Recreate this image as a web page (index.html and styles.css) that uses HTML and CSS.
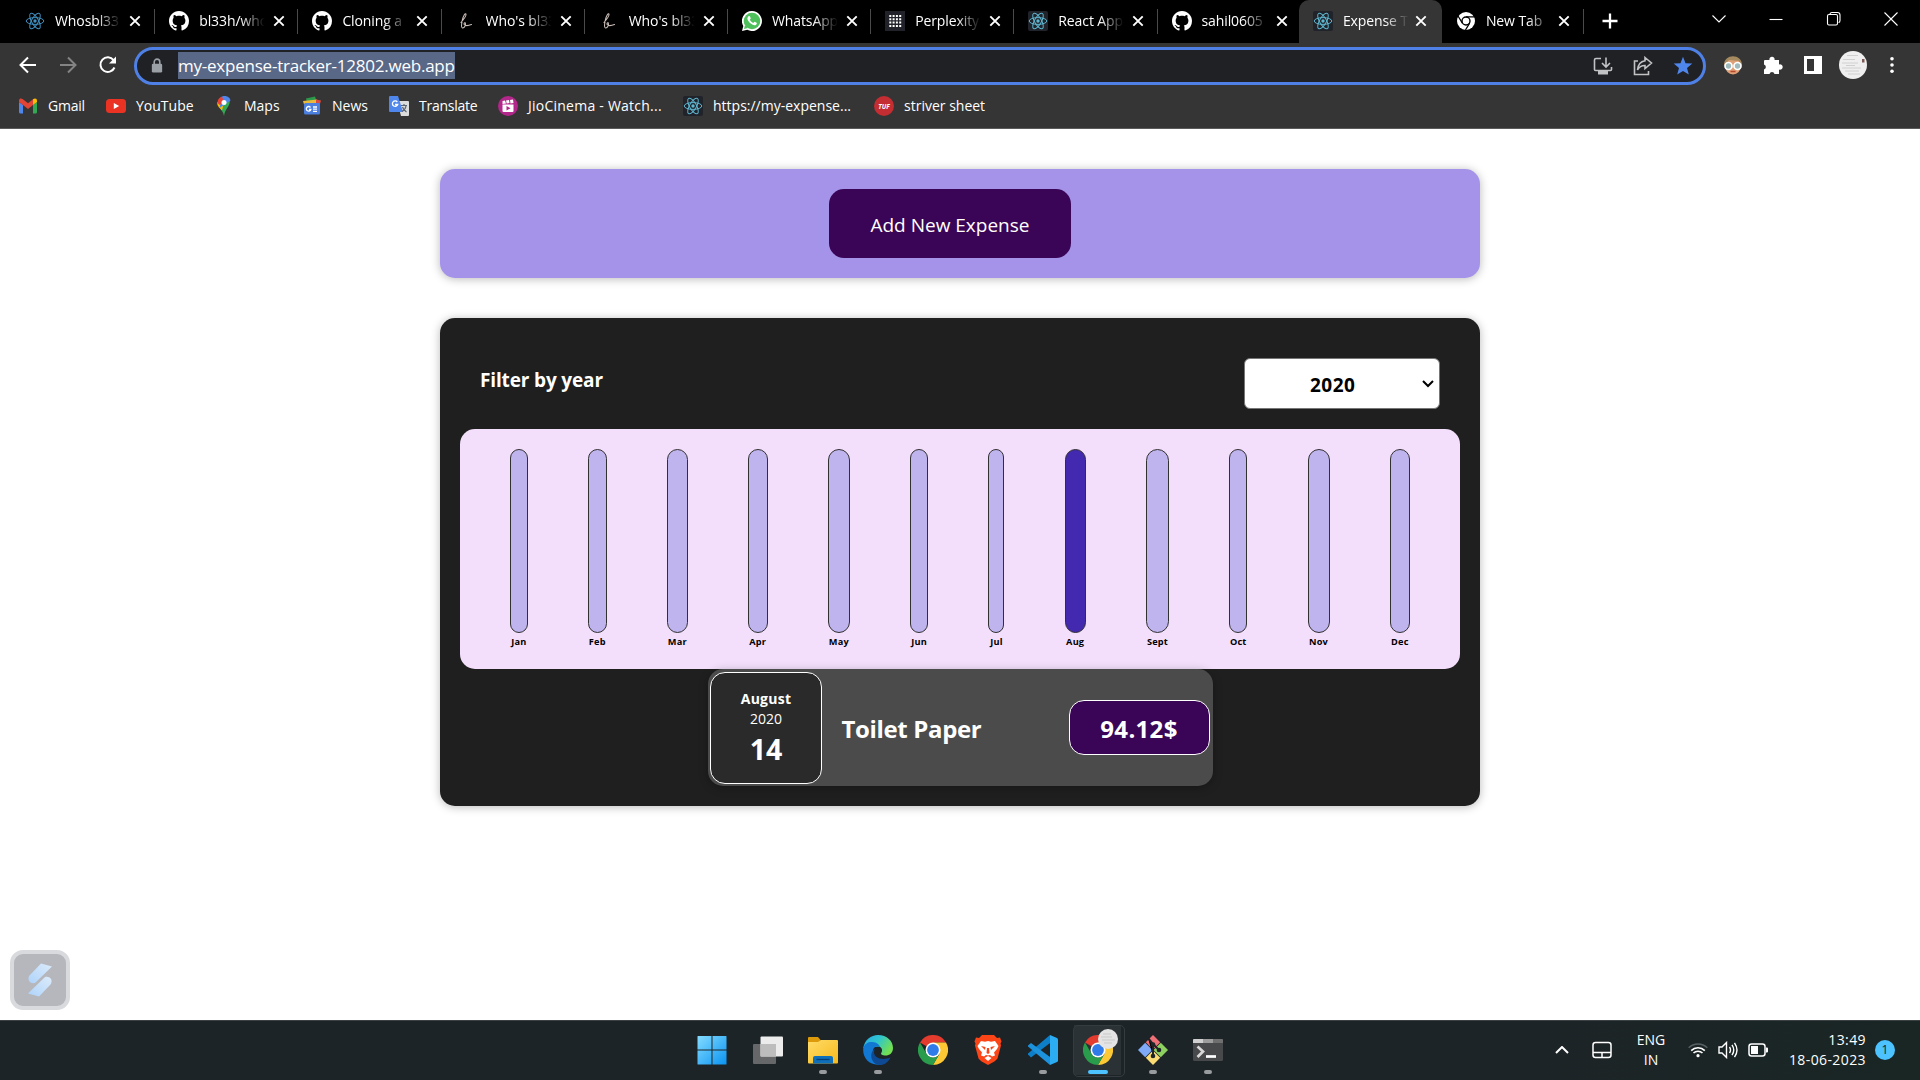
FILE: index.html
```html
<!DOCTYPE html>
<html lang="en">
<head>
<meta charset="utf-8">
<title>Expense Tracker</title>
<link rel="stylesheet" href="styles.css">
</head>
<body>
<svg class="defs" aria-hidden="true">
  <defs>
    <symbol id="react" viewBox="0 0 20 20">
      <g fill="none" stroke="currentColor" stroke-width="1">
        <ellipse cx="10" cy="10" rx="8.8" ry="3.4"/>
        <ellipse cx="10" cy="10" rx="8.8" ry="3.4" transform="rotate(60 10 10)"/>
        <ellipse cx="10" cy="10" rx="8.8" ry="3.4" transform="rotate(120 10 10)"/>
      </g>
      <circle cx="10" cy="10" r="1.7" fill="currentColor"/>
    </symbol>
    <symbol id="github" viewBox="0 0 16 16">
      <path fill="#fff" d="M8 0C3.58 0 0 3.58 0 8c0 3.54 2.29 6.53 5.47 7.59.4.07.55-.17.55-.38 0-.19-.01-.82-.01-1.49-2.01.37-2.53-.49-2.69-.94-.09-.23-.48-.94-.82-1.13-.28-.15-.68-.52-.01-.53.63-.01 1.08.58 1.23.82.72 1.21 1.87.87 2.33.66.07-.52.28-.87.51-1.07-1.78-.2-3.64-.89-3.64-3.95 0-.87.31-1.59.82-2.15-.08-.2-.36-1.02.08-2.12 0 0 .67-.21 2.2.82.64-.18 1.32-.27 2-.27s1.36.09 2 .27c1.53-1.04 2.2-.82 2.2-.82.44 1.1.16 1.92.08 2.12.51.56.82 1.27.82 2.15 0 3.07-1.87 3.75-3.65 3.95.29.25.54.73.54 1.48 0 1.07-.01 1.93-.01 2.2 0 .21.15.46.55.38A8.01 8.01 0 0 0 16 8c0-4.42-3.58-8-8-8z"/>
    </symbol>
    <symbol id="script-b" viewBox="0 0 20 20">
      <path fill="none" stroke="#c9bcb6" stroke-width="1.1" stroke-linecap="round" d="M5 11.500C8 8 10.500 5 10 3C9.300 1.800 7.500 4.500 6.500 8.500C5.500 12.500 4.800 16.500 6.500 17C8.500 17.300 10 14 9.300 12C8.800 11 7.300 12.500 8.300 13.700C10 15.500 13 14.500 15.500 13.500"/>
    </symbol>
    <symbol id="close" viewBox="0 0 12 12">
      <path d="M1.300 1.300L10.700 10.700M10.700 1.300L1.300 10.700" stroke="#fff" stroke-width="1.900" fill="none"/>
    </symbol>
    <symbol id="chrome" viewBox="0 0 30 30">
      <path fill="#e33b2e" d="M15 15L2 7.500A15 15 0 0 1 28 7.500H15z"/>
      <path fill="#fcc934" d="M15 7.500H28A15 15 0 0 1 15 30L21.500 18.750z"/>
      <path fill="#2a9d4c" d="M2 7.500L8.500 18.750A7.500 7.500 0 0 0 21.500 18.750L15 30A15 15 0 0 1 2 7.500z"/>
      <circle cx="15" cy="15" r="7.500" fill="#fff"/>
      <circle cx="15" cy="15" r="5.900" fill="#2f7bea"/>
    </symbol>
  </defs>
</svg>

<header class="browser">
  <div class="tabstrip">
    <div class="tab"><svg class="fav blue"><use href="#react"/></svg><span class="tab-title">Whosbl33</span><svg class="x"><use href="#close"/></svg></div>
    <div class="tab"><svg class="fav"><use href="#github"/></svg><span class="tab-title">bl33h/who</span><svg class="x"><use href="#close"/></svg></div>
    <div class="tab"><svg class="fav"><use href="#github"/></svg><span class="tab-title">Cloning a</span><svg class="x"><use href="#close"/></svg></div>
    <div class="tab"><svg class="fav"><use href="#script-b"/></svg><span class="tab-title">Who's bl33</span><svg class="x"><use href="#close"/></svg></div>
    <div class="tab"><svg class="fav"><use href="#script-b"/></svg><span class="tab-title">Who's bl33</span><svg class="x"><use href="#close"/></svg></div>
    <div class="tab"><svg class="fav" viewBox="0 0 20 20"><path fill="#fff" d="M10 0a10 10 0 1 1-4.800 18.800L0 20l1.300-5A10 10 0 0 1 10 0z"/><circle cx="10" cy="10" r="8.300" fill="#4dbf5b"/><path fill="#4dbf5b" d="M2 18l1-4 3 3z"/><path fill="#fff" d="M6.500 5.200c.7-.5 1.300-.2 1.600.6l.6 1.500c.1.500-.7 1.100-.8 1.400.8 1.700 2 2.600 3.500 3.200.4-.2.900-1.300 1.300-1.100l1.900.9c.7.500-.1 2.100-1.300 2.500-2.700.8-7.600-3.400-7.900-6.600 0-1 .5-2 1.100-2.400z"/></svg><span class="tab-title">WhatsApp</span><svg class="x"><use href="#close"/></svg></div>
    <div class="tab"><svg class="fav" viewBox="0 0 20 20"><path fill="#22232a" d="M0 0h20v20H0z"/><path stroke="#fff" stroke-width="2" stroke-dasharray="2 1.300" d="M4.300 5h12M4.300 8.300h12M4.300 11.600h12M4.300 14.900h12"/></svg><span class="tab-title">Perplexity</span><svg class="x"><use href="#close"/></svg></div>
    <div class="tab"><svg class="fav boxed"><use href="#react"/></svg><span class="tab-title">React App</span><svg class="x"><use href="#close"/></svg></div>
    <div class="tab last"><svg class="fav"><use href="#github"/></svg><span class="tab-title">sahil0605</span><svg class="x"><use href="#close"/></svg></div>
    <div class="tab active"><svg class="fav boxed"><use href="#react"/></svg><span class="tab-title">Expense T</span><svg class="x"><use href="#close"/></svg></div>
    <div class="tab newest"><svg class="fav" viewBox="0 0 20 20"><circle cx="10" cy="10" r="9" fill="#fff"/><circle cx="10" cy="10" r="4" fill="none" stroke="#000" stroke-width="1.400"/><path stroke="#000" stroke-width="1.300" d="M10 5.800h8.500M6.400 12.100L2 5M13.600 12.100L9.500 19"/></svg><span class="tab-title">New Tab</span><svg class="x"><use href="#close"/></svg></div>
    <svg class="new-tab" viewBox="0 0 16 16"><path d="M8 0.500v15M.5 8h15" stroke="#fff" stroke-width="2.300"/></svg>
    <div class="window-controls">
      <svg viewBox="0 0 16 16"><path d="M1.500 4.500L8 11l6.500-6.500"/></svg>
      <svg viewBox="0 0 16 16"><path d="M1.500 8.500h13"/></svg>
      <svg viewBox="0 0 16 16"><rect x="1.500" y="3.500" width="10" height="10.500" rx="1.500"/><path d="M4 3.500C4 2 4.500 1.500 6 1.500h5.500Q14 1.500 14 4v5.500q0 2-1.500 2"/></svg>
      <svg viewBox="0 0 16 16"><path d="M1.500 1.500l13 13M14.500 1.500l-13 13"/></svg>
    </div>
  </div>

  <div class="toolbar">
    <div class="nav">
      <svg viewBox="0 0 20 20"><path d="M18 10H3M10 2.500L2.500 10l7.500 7.500"/></svg>
      <svg class="dim" viewBox="0 0 20 20"><path d="M2 10h15M10 2.500l7.500 7.500-7.500 7.500"/></svg>
      <svg viewBox="0 0 20 20"><path d="M16.500 12.500A7.300 7.300 0 1 1 15.600 5.200"/><path d="M18 1.500v7h-7z" fill="#fff" stroke="none"/></svg>
    </div>
    <div class="omnibox">
      <svg class="lock" viewBox="0 0 12 16"><path d="M3 7V4.200a3 3 0 0 1 6 0V7" fill="none" stroke="#9aa0a6" stroke-width="1.700"/><rect x=".5" y="6" width="11" height="9.500" rx="1.500" fill="#9aa0a6"/></svg>
      <span class="url">my-expense-tracker-12802.web.app</span>
      <div class="omni-actions">
        <svg viewBox="0 0 20 20"><path d="M8 2.500H3q-1.500 0-1.500 1.500v9.500q0 1 1 1h15q1 0 1-1V11M13 1.500v9M9 7l4 4 4-4"/><path d="M5 15h10v3.500H5z" fill="#c1c2c4" stroke="none"/></svg>
        <svg viewBox="0 0 20 20"><path d="M5 5H1.500v13.500h14V15M12 1.500l6.500 5.500-6.500 5.500V9.500C8 9.500 6 11 4.500 14 5 9 7.500 5.500 12 4.800z"/></svg>
        <svg viewBox="0 0 20 20"><path fill="#4f86ec" stroke="none" d="M10 .8l2.500 6.400 6.800.4-5.300 4.300 1.800 6.700L10 14.900l-5.800 3.700L6 11.900.7 7.600l6.800-.4z"/></svg>
      </div>
    </div>
    <div class="extensions">
      <svg viewBox="0 0 20 20"><ellipse cx="10" cy="11" rx="8" ry="8.500" fill="#dfa077"/><path fill="#a68a5f" d="M1 11C0-2 20-2 19 11L16 6 6 5z"/><g fill="#9fb9bd" stroke="#fff" stroke-width="1.700"><circle cx="5.500" cy="11" r="3.500"/><circle cx="14.500" cy="11" r="3.500"/></g><path d="M7.500 16.500h5" stroke="#b4472e" stroke-width="1.500"/></svg>
      <svg viewBox="0 0 20 20"><path fill="#fff" d="M2 5h4.500a2.600 2.600 0 1 1 5 0H16v4.500a2.700 2.700 0 1 1 0 5V19h-4.500a2.600 2.600 0 0 0-5 0H1v-4.500a2.600 2.600 0 0 0 0-5V6q0-1 1-1z"/></svg>
      <svg viewBox="0 0 20 20"><path fill="#fff" fill-rule="evenodd" d="M1 1h18v18H1zM4 4v12h7V4z"/></svg>
      <svg class="avatar" viewBox="0 0 28 28"><circle cx="14" cy="14" r="14" fill="#efefef"/><path stroke="#d0d0d0" d="M8 4.500h11M4 8.500h12M3 12h16M7 14.500h9M3 17h19M6 20h14M9 23h12"/><path fill="#7b5a55" d="M23 8h2.500v3.500H23z"/></svg>
      <svg class="dots" viewBox="0 0 6 20"><g fill="#fff"><circle cx="3" cy="3" r="2"/><circle cx="3" cy="10" r="2"/><circle cx="3" cy="17" r="2"/></g></svg>
    </div>
  </div>

  <nav class="bookmarks">
    <a class="tight"><svg viewBox="0 0 20 20"><path fill="#4f86ec" d="M1 6l4 3v8.500H2.500Q1 17.500 1 16z"/><path fill="#35a853" d="M15 9l4-3v10q0 1.500-1.500 1.500H15z"/><path fill="#e24435" d="M1 4.500C1 2.300 3.300 2 4.500 3L10 7.200 15 3.300V9l-5 4-5-4-4-3z"/><path fill="#fbbc04" d="M15 3.300C17 1.800 19 2.600 19 4.800V6l-4 3z"/></svg>Gmail</a>
    <a><svg viewBox="0 0 20 20"><rect y="3" width="20" height="14" rx="3.500" fill="#eb3323"/><path fill="#fff" d="M7.800 7v6l5.400-3z"/></svg>YouTube</a>
    <a><svg viewBox="0 0 20 20"><path fill="#35a853" d="M10 20C9.300 16 7.500 14 5 11L15.500 4c1.500 6-4.500 8-5.500 16z"/><path fill="#fbbc04" d="M5 11.500C3.500 9.500 3 8 3.300 6L10 7l-2 7.500z"/><path fill="#4f86ec" d="M8 .5C13 -1 16 2 16.500 4.500L5.500 12z"/><path fill="#ea4335" d="M4 4C5 2 6.500 1 8 .5L9.500 5 6 9 3.300 7z"/><circle cx="10" cy="6.500" r="2.500" fill="#fff"/></svg>Maps</a>
    <a><svg viewBox="0 0 20 20"><path fill="#2c9a4b" d="M4 2.500l9-2 2 6H5z"/><path fill="#e9b93b" d="M1 5l14-1.500 2 5H2z"/><path fill="#dc4b3f" d="M14 3.500l5 1-1.500 5H14z"/><rect x="2" y="7" width="16" height="11.500" rx="1.500" fill="#4b7fe0"/><path stroke="#fff" stroke-width="1.300" fill="none" d="M8.500 11.500A2.300 2.300 0 1 0 8.800 13.500H7M11 11h4M11 13.200h4M11 15.400h4"/></svg>News</a>
    <a class="tight"><svg viewBox="0 0 20 20"><path fill="#dcdcdc" d="M8 5h11q1 0 1 1v13q0 1-1 1h-7z"/><path fill="#4f86ec" d="M1 0h8l5 16H1q-1 0-1-1V1q0-1 1-1z"/><path stroke="#fff" stroke-width="1.300" fill="none" d="M8.300 6A2.700 2.700 0 1 0 8.700 8.500H6"/><path stroke="#5d6673" stroke-width="1.200" fill="none" d="M12 9.500h6M15 8v1.500M17 10c-.5 3-2 4.500-4 5.500M13.500 11c.5 2 2 3.500 4 5"/></svg>Translate</a>
    <a class="wide"><svg viewBox="0 0 20 20"><circle cx="10" cy="10" r="10" fill="#b3278a"/><path fill="#fff" d="M4.500 8.500h11V15q0 1-1 1h-9q-1 0-1-1zM4.500 5l2.500-.4 1 3-3.500.4zM8 4.500l3-.5.500 3-2.800.5zM12 4l3-.5.500 3.500-3 .4z"/><path fill="#b3278a" d="M8.500 10v4.500l4-2.200z"/></svg>JioCinema - Watch...</a>
    <a><svg class="boxed"><use href="#react"/></svg>https://my-expense...</a>
    <a><svg viewBox="0 0 20 20"><circle cx="10" cy="10" r="10" fill="#c42d31"/><text x="10" y="12.500" text-anchor="middle" class="tuf">TUF</text></svg>striver sheet</a>
  </nav>
</header>

<main class="page">
  <section class="card new-expense">
    <button class="add" type="button">Add New Expense</button>
  </section>

  <section class="card expenses">
    <div class="filter">
      <label>Filter by year</label>
      <div class="year-select"><span>2020</span><svg viewBox="0 0 12 8"><path d="M1 1l5 5 5-5" fill="none" stroke="#000" stroke-width="2"/></svg></div>
    </div>
    <div class="chart">
      <div class="month" style="width:17.6px"><i></i><span>Jan</span></div>
      <div class="month" style="width:18.6px"><i></i><span>Feb</span></div>
      <div class="month" style="width:20.8px"><i></i><span>Mar</span></div>
      <div class="month" style="width:19.6px"><i></i><span>Apr</span></div>
      <div class="month" style="width:22px"><i></i><span>May</span></div>
      <div class="month" style="width:18px"><i></i><span>Jun</span></div>
      <div class="month" style="width:16px"><i></i><span>Jul</span></div>
      <div class="month filled" style="width:21px"><i></i><span>Aug</span></div>
      <div class="month" style="width:23px"><i></i><span>Sept</span></div>
      <div class="month" style="width:18px"><i></i><span>Oct</span></div>
      <div class="month" style="width:22px"><i></i><span>Nov</span></div>
      <div class="month" style="width:20px"><i></i><span>Dec</span></div>
    </div>
    <article class="item">
      <div class="date"><b>August</b><span>2020</span><strong>14</strong></div>
      <h2>Toilet Paper</h2>
      <div class="price">94.12$</div>
    </article>
  </section>

  <div class="widget"><svg viewBox="0 0 26 34"><defs><linearGradient id="wg" x1="0" y1="1" x2="1" y2="0"><stop offset="0" stop-color="#aed3fb"/><stop offset="1" stop-color="#dcebfa"/></linearGradient></defs><path fill="url(#wg)" d="M14 .5L25 3.500 8 20C2 21 0 16 2.500 12.500z"/><path fill="url(#wg)" d="M12 33.500L1 30.500 18 14C24 13 26 18 23.500 21.500z"/></svg></div>
</main>

<footer class="taskbar">
  <div class="apps">
    <div class="app"><svg viewBox="0 0 30 30"><defs><linearGradient id="win" x1="0" y1="0" x2="1" y2="1"><stop offset="0" stop-color="#84dcff"/><stop offset="1" stop-color="#0a93f2"/></linearGradient></defs><path fill="url(#win)" d="M.5 1.500q0-.5.500-.5h13.500v13.500H.500zM15.500 1H29q.5 0 .5.500v13h-14zM.5 15.500h14v14H1q-.5 0-.5-.5zM15.500 15.500h14V29q0 .5-.5.500H15.500z"/></svg></div>
    <div class="app"><svg viewBox="0 0 30 30"><rect x="0" y="9" width="23" height="20" rx="1" fill="#666768"/><rect x="7.500" y="1.500" width="22.500" height="20" rx="1" fill="#ececec"/><path fill="#bdbdbd" d="M7.500 9H23v12.500H7.500z"/></svg></div>
    <div class="app running"><svg viewBox="0 0 30 30"><defs><linearGradient id="fold" x1="0" y1="0" x2="1" y2="1"><stop offset="0" stop-color="#ffdc68"/><stop offset="1" stop-color="#f7b91b"/></linearGradient></defs><path fill="#dd9a0b" d="M0 3q0-1 1-1h9l3 3.500V9H0z"/><path fill="url(#fold)" d="M0 7h10l3-2h16q1 0 1 1v21.500q0 1-1 1H1q-1 0-1-1z"/><path fill="#0f6fb9" d="M5 28.500V23q0-2 2-2h16q2 0 2 2v5.500z"/><path stroke="#063f78" stroke-width="1.300" d="M8.500 24.500h13"/></svg></div>
    <div class="app running"><svg viewBox="0 0 30 30"><defs><linearGradient id="ed" x1="0" y1="0" x2="1" y2=".5"><stop offset="0" stop-color="#2aa8e6"/><stop offset=".5" stop-color="#2fc5cf"/><stop offset="1" stop-color="#72e052"/></linearGradient></defs><path fill="url(#ed)" d="M.3 13C1.500 5 8 0 15 0c9 0 15 6 15 13 0 5-3.500 7.500-7.500 7.500-3 0-5.500-1-4-3 1.500-2.500 0-6-3.500-6z"/><path fill="#1178d4" d="M.3 13C2 8 6 6.500 9.500 7c4 .4 7 2.500 7.500 5-5-2-8 1.500-7 6 1 5 5 9 9.500 11C8 32-1 24 .3 13z"/><path fill="#0e4a94" d="M12 14c-4 6 4 13 15.500 8.500C25 28 20 30.500 16 30 7 28 6 17 12 14z"/></svg></div>
    <div class="app"><svg><use href="#chrome"/></svg></div>
    <div class="app"><svg viewBox="0 0 30 30"><path fill="#fb4517" d="M9 0h12l3 3 3-.5 1.500 4-1 2 .500 2-3.500 13Q23 26 15 30 7 26 5.500 23.500L2 10.500l.5-2-1-2L3 2.500 6 3z"/><path fill="#fff" d="M8 6l4 .8 3-.8 3 .8 4-.8 3.500 5-1.500 3-3 3.500 1 3-3 1-2-1.500-2 .5-2-.5L11 21.500l-3-1 1-3L6 14l-1.500-3z"/><path fill="#fb4517" d="M8 11l4.500 1-.5 3zM22 11l-4.500 1 .5 3zM14 13h2l.5 5L15 19l-1.500-1z"/><path fill="#fff" d="M11.500 23L15 21l3.500 2-3.500 3z"/></svg></div>
    <div class="app running"><svg viewBox="0 0 30 30"><path fill="#0d7fc9" d="M22 0v8L3 22.500 0 19.500v-1z"/><path fill="#1c92dd" d="M22 30v-8L3 8 0 10.500v1z"/><path fill="#2cacf3" d="M22 0l7 3q1 .5 1 1.500v21q0 1-1 1.500l-7 3z"/></svg></div>
    <div class="app running current"><svg><use href="#chrome"/></svg><svg class="badge" viewBox="0 0 20 20"><circle cx="10" cy="10" r="10" fill="#e4e4e4"/><path stroke="#c9c9c9" d="M5 5h8M3 8h11M4 11h13M6 14h8"/></svg></div>
    <div class="app running"><svg viewBox="0 0 30 30"><path fill="#f07077" d="M15 0l7.200 7.200L15 14.400 7.800 7.200z"/><path fill="#7eaaf8" d="M7.200 7.800l7.200 7.200-7.200 7.200L0 15z"/><path fill="#8ed160" d="M22.800 7.800L30 15l-7.200 7.200-7.200-7.200z"/><path fill="#fbdc74" d="M15 15.600l7.200 7.200L15 30l-7.200-7.200z"/><path stroke="#1d2427" stroke-width="2" d="M10 3l5 6v12M15 9l6 6"/><g fill="#1d2427"><circle cx="15" cy="9.500" r="2.300"/><circle cx="21" cy="15" r="2.300"/><circle cx="15" cy="21" r="2.300"/></g></svg></div>
    <div class="app running"><svg viewBox="0 0 30 30"><rect y="4" width="30" height="22" rx="1.500" fill="#48494b"/><path fill="#d0d0d0" d="M0 8V5q0-1 1-1h9v4z"/><path fill="#9d9d9d" d="M10 4h10v4H10z"/><path fill="#6f6f6f" d="M20 4h9q1 0 1 1v3H20z"/><path fill="none" stroke="#d8d8d8" stroke-width="2.700" d="M4.500 11.500l5.500 5-5.500 5.500"/><path stroke="#fff" stroke-width="2.700" d="M13 21.500h10"/></svg></div>
  </div>
  <div class="tray">
    <svg class="up" viewBox="0 0 14 8"><path d="M1 7l6-6 6 6" stroke-width="2"/></svg>
    <svg class="pad" viewBox="0 0 20 18"><rect x="1" y="1.500" width="18" height="15" rx="2.500" stroke-width="1.500"/><path d="M1 11.500h18M10 11.500v5" stroke-width="1.500"/></svg>
    <div class="lang"><span>ENG</span><span>IN</span></div>
    <svg class="wifi" viewBox="0 0 20 16"><path stroke="#586064" stroke-width="1.500" d="M.7 5.800a13 13 0 0 1 18.600 0"/><path stroke-width="1.600" d="M3.200 8.600a9.600 9.600 0 0 1 13.600 0M5.500 11a6.500 6.500 0 0 1 9 0"/><circle cx="10" cy="13.700" r="1.600" fill="#fff" stroke="none"/></svg>
    <svg class="vol" viewBox="0 0 20 18"><path stroke-width="1.400" d="M1 6h3l4.500-4.500v15L4 12H1zM11.500 6q2 3 0 6M14 3.800q3.500 5.200 0 10.400M16.500 1.800q5 7.200 0 14.400"/></svg>
    <svg class="bat" viewBox="0 0 20 14"><rect x="1" y="1" width="16" height="12" rx="2.500" stroke-width="1.500"/><path fill="#fff" stroke="none" d="M3 3h7v8H3zM18 4.500h1q1 0 1 1v3q0 1-1 1h-1z"/></svg>
    <div class="clock"><span>13:49</span><span>18-06-2023</span></div>
    <div class="count">1</div>
  </div>
</footer>
</body>
</html>
```
FILE: styles.css
```css
* { box-sizing: border-box; }

body {
  margin: 0;
  width: 1920px;
  height: 1080px;
  overflow: hidden;
  display: flex;
  flex-direction: column;
  background: #fff;
  font-family: "Open Sans", "Noto Sans", sans-serif;
}

svg { display: block; flex: none; }
.defs { position: absolute; width: 0; height: 0; }

/* Browser window */
.browser {
  height: 129px;
  flex: none;
  background: #353535;
  border-bottom: 1px solid #5b5b5b;
  color: #fff;
}

.tabstrip {
  height: 43px;
  padding-left: 12px;
  display: flex;
  background: #000;
}
.tab {
  width: 143.200px;
  height: 43px;
  padding: 0 0 1px 13px;
  display: flex;
  align-items: center;
  background: linear-gradient(#4a4a4a, #4a4a4a) right 9px / 1px 25px no-repeat;
}
.tab:nth-child(n+2) { padding-left: 14px; }
.tab.last { width: 141.400px; background: none; }
.tab.active {
  width: 143px;
  background: #353535;
  border-radius: 10px 10px 0 0;
}
.tab.newest { width: 142.500px; }
.fav { width: 20px; height: 20px; }
.fav.blue { color: #3f8fc0; }
.boxed { background: #20232a; border-radius: 2px; color: #5fb6cf; }
.tab-title {
  width: 67px;
  margin-left: 10px;
  overflow: hidden;
  white-space: nowrap;
  font-size: 14px;
  line-height: 20px;
  letter-spacing: -0.1px;
  -webkit-mask-image: linear-gradient(90deg, #000 62%, transparent 98%);
  mask-image: linear-gradient(90deg, #000 62%, transparent 98%);
}
.x { width: 12px; height: 12px; margin-left: 7px; }
.active .x, .newest .x { margin-left: 5px; }
.new-tab { width: 16px; height: 16px; margin: 13px 0 0 18px; }
.window-controls {
  margin-left: auto;
  display: flex;
}
.window-controls svg {
  width: 16px;
  height: 16px;
  margin: 11px 21px 0 20.5px;
  fill: none;
  stroke: #fff;
  stroke-width: 1.100;
}

.toolbar {
  height: 43px;
  display: flex;
  align-items: center;
}
.nav {
  width: 134px;
  padding-left: 18px;
  display: flex;
  gap: 20px;
}
.nav svg {
  width: 20px;
  height: 20px;
  fill: none;
  stroke: #fff;
  stroke-width: 2;
}
.nav .dim { stroke: #848484; }
.omnibox {
  width: 1572px;
  height: 38px;
  padding: 0 10px 0 14px;
  margin-top: 2px;
  display: flex;
  align-items: center;
  border: 3px solid #4f80e6;
  border-radius: 19px;
  background: #202125;
}
.lock { width: 12px; height: 15px; }
.url {
  margin-left: 15px;
  background: #5a6887;
  font-size: 17px;
  line-height: 27px;
  letter-spacing: -0.23px;
}
.omni-actions { margin-left: auto; display: flex; gap: 20px; }
.omni-actions svg {
  width: 20px;
  height: 20px;
  fill: none;
  stroke: #c1c2c4;
  stroke-width: 1.600;
}
.extensions {
  padding-left: 17px;
  display: flex;
  align-items: center;
  gap: 20px;
}
.extensions svg { width: 20px; height: 20px; }
.extensions .avatar { width: 28px; height: 28px; margin-left: -4px; }
.extensions .dots { width: 6px; height: 18px; margin-left: 2px; }

.bookmarks {
  height: 42px;
  padding: 0 0 2px 18px;
  display: grid;
  grid-template-columns: 88px 108px 88px 87px 109px 185px 191px 130px;
  align-items: center;
  font-size: 14px;
  line-height: 20px;
}
.bookmarks a {
  display: flex;
  align-items: center;
  gap: 10px;
  white-space: nowrap;
}
.bookmarks svg { width: 20px; height: 20px; }
.bookmarks .tight { letter-spacing: -0.25px; }
.bookmarks .wide { letter-spacing: 0.24px; }
.tuf { font: italic 700 6.500px "Open Sans", sans-serif; fill: #fff; }

/* Expense tracker */
.page {
  height: 891px;
  flex: none;
  position: relative;
  padding-top: 40px;
  display: flex;
  flex-direction: column;
  align-items: center;
  gap: 40px;
}
.card {
  width: 1040px;
  padding: 20px;
  border-radius: 15px;
  box-shadow: 0 1px 10px rgba(0, 0, 0, 0.28);
}
.new-expense {
  height: 109px;
  padding-right: 40px;
  display: flex;
  justify-content: center;
  background: #a593ea;
}
.add {
  width: 242px;
  height: 69px;
  padding: 3px 0 0;
  border: 0;
  border-radius: 15px;
  background: #3a0556;
  color: #fff;
  font: 19px/27px "Open Sans", sans-serif;
}
.expenses {
  height: 488px;
  display: flex;
  flex-direction: column;
  align-items: center;
  background: #1f1f1f;
}
.filter {
  width: 100%;
  height: 91px;
  padding: 20px;
  display: flex;
  justify-content: space-between;
  color: #fff;
  font-weight: 700;
  font-size: 19px;
}
.filter label { line-height: 44px; letter-spacing: -0.15px; }
.year-select {
  width: 196px;
  height: 51px;
  padding: 0 5px 0 65px;
  display: flex;
  align-items: center;
  justify-content: space-between;
  border: 1px solid #767676;
  border-radius: 6px;
  background: #fff;
  color: #000;
  letter-spacing: 0.5px;
}
.year-select span { padding-top: 2px; }
.year-select svg { width: 12px; height: 8px; }
.chart {
  width: 1000px;
  height: 240px;
  flex: none;
  padding: 20px;
  display: flex;
  justify-content: space-around;
  border-radius: 15px;
  background: #f3dffb;
}
.month {
  display: flex;
  flex-direction: column;
  align-items: center;
}
.month i {
  width: 100%;
  height: 186px;
  border: 1px solid #313131;
  border-radius: 15px;
  background: #c0b4ee;
}
.month.filled i { background: #4328b0; }
.month span {
  font-size: 9.200px;
  font-weight: 700;
  line-height: 14px;
  letter-spacing: 0.2px;
  margin-top: 2px;
}

.item {
  width: 505px;
  height: 117px;
  padding: 3px 3px 2px 2px;
  display: flex;
  align-items: center;
  border-radius: 15px;
  background: #4b4b4b;
  box-shadow: 0 2px 10px rgba(0, 0, 0, 0.28);
  color: #fff;
}
.date {
  width: 112px;
  height: 112px;
  padding: 16px 0 0 1px;
  display: flex;
  flex-direction: column;
  align-items: center;
  border: 1px solid #fff;
  border-radius: 15px;
  background: #2a2a2a;
  font-size: 14px;
  line-height: 20px;
}
.date b { letter-spacing: 0.25px; }
.date strong { font-size: 28.500px; line-height: 41px; }
.item h2 {
  flex: 1;
  margin: 0 0 0 20px;
  font-size: 24px;
  letter-spacing: -0.35px;
}
.price {
  width: 141px;
  height: 55px;
  margin-bottom: 1px;
  border: 1px solid #fff;
  border-radius: 15px;
  background: #3a0556;
  text-align: center;
  font-size: 24px;
  font-weight: 700;
  line-height: 55px;
  letter-spacing: 0.34px;
}

.widget {
  position: absolute;
  left: 10px;
  top: 821px;
  width: 60px;
  height: 60px;
  display: grid;
  place-items: center;
  border: 4px solid #d9dade;
  border-radius: 13px;
  background: #b6b7bc;
}
.widget svg { width: 26px; height: 34px; }

/* Taskbar */
.taskbar {
  height: 60px;
  flex: none;
  padding-left: 684px;
  display: flex;
  border-top: 1px solid #3b4143;
  background: linear-gradient(90deg, #1d2427 80%, #192624);
  color: #fff;
}
.apps { display: flex; }
.app {
  position: relative;
  width: 55px;
  height: 58px;
  display: grid;
  place-items: center;
}
.app:first-child { width: 56px; }
.app > svg { width: 30px; height: 30px; }
.app.running::after {
  content: "";
  position: absolute;
  left: 23.5px;
  bottom: 5px;
  width: 8px;
  height: 4px;
  border-radius: 2px;
  background: #989c9e;
}
.app.current {
  background: linear-gradient(#2b3235, #2b3235) center 4px / 47px 50px no-repeat;
}
.app.current::before {
  content: "";
  position: absolute;
  left: 2.5px;
  top: 4px;
  width: 50px;
  height: 50px;
  border: 1px solid #353c3f;
  border-radius: 5px;
}
.app.current::after { left: 17.5px; width: 20px; background: #4cc2ff; }
.app .badge {
  position: absolute;
  left: 28px;
  top: 8px;
  width: 20px;
  height: 20px;
}

.tray {
  margin-left: auto;
  padding: 0 25px 1px 0;
  display: flex;
  align-items: center;
  font-size: 14px;
  line-height: 20px;
}
.tray svg { fill: none; stroke: #fff; }
.up { width: 14px; height: 8px; margin-right: 23px; }
.pad { width: 20px; height: 18px; margin-right: 24px; }
.lang, .clock { display: flex; flex-direction: column; }
.lang { width: 30px; align-items: center; margin-right: 22px; }
.wifi { width: 20px; height: 16px; margin-right: 10px; }
.vol { width: 20px; height: 18px; margin-right: 10px; }
.bat { width: 20px; height: 14px; margin-right: 20px; }
.clock { width: 78px; align-items: flex-end; letter-spacing: 0.4px; }
.count {
  width: 20px;
  height: 20px;
  margin-left: 9px;
  border-radius: 50%;
  background: #4cc2ff;
  color: #16242c;
  font-size: 12px;
  text-align: center;
}
```
